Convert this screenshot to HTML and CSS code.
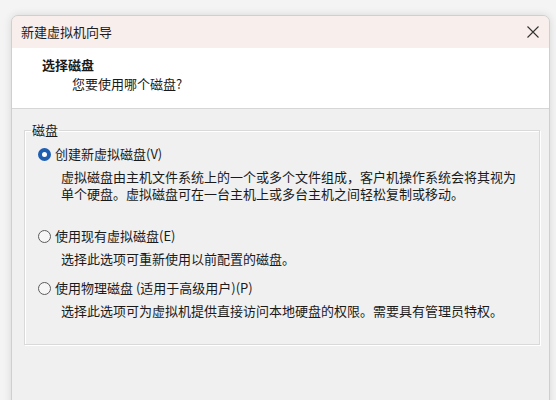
FILE: index.html
```html
<!DOCTYPE html>
<html lang="zh-CN">

<head>
    <meta charset="UTF-8">
    <meta name="viewport" content="width=device-width, initial-scale=1.0">
    <title>新建虚拟机向导</title>
    <link rel="stylesheet" href="styles.css">
</head>

<body>
    <div class="window">
        <div class="titlebar">
            <span class="title">新建虚拟机向导</span>
            <span class="close">
                <svg width="12" height="12" viewBox="0 0 12 12">
                    <path d="M0.5 0.5 L11.5 11.5 M11.5 0.5 L0.5 11.5" stroke="#333" stroke-width="1.1" fill="none" />
                </svg>
            </span>
        </div>

        <div class="header">
            <div class="header-title">选择磁盘</div>
            <div class="header-sub">您要使用哪个磁盘?</div>
        </div>

        <div class="content">
            <fieldset class="group">
                <legend>磁盘</legend>

                <div class="option option-1">
                    <span class="radio checked"></span>
                    <span class="label">创建新虚拟磁盘(V)</span>
                </div>
                <div class="desc">
                    <div>虚拟磁盘由主机文件系统上的一个或多个文件组成，客户机操作系统会将其视为</div>
                    <div>单个硬盘。虚拟磁盘可在一台主机上或多台主机之间轻松复制或移动。</div>
                </div>

                <div class="option option-2">
                    <span class="radio"></span>
                    <span class="label">使用现有虚拟磁盘(E)</span>
                </div>
                <div class="desc">选择此选项可重新使用以前配置的磁盘。</div>

                <div class="option option-3">
                    <span class="radio"></span>
                    <span class="label">使用物理磁盘 (适用于高级用户)(P)</span>
                </div>
                <div class="desc">选择此选项可为虚拟机提供直接访问本地硬盘的权限。需要具有管理员特权。</div>
            </fieldset>
        </div>
    </div>
</body>

</html>
```

FILE: styles.css
```css
* {
    box-sizing: border-box;
}

html,
body {
    height: 100%;
}

body {
    margin: 0;
    padding: 15px 0 0 11px;
    overflow: hidden;
    background: #f4f4f4;
    font-family: "Noto Sans CJK SC", "Noto Sans", sans-serif;
    font-size: 13px;
    line-height: 16px;
    color: #1a1a1a;
}

.window {
    width: 539px;
    height: 420px;
    border: 1px solid #cfcfcf;
    border-radius: 7px 7px 0 0;
    overflow: hidden;
    background: #f0f0f0;
    box-shadow: 0 0 8px rgba(0, 0, 0, 0.12);
}

.titlebar {
    height: 32px;
    display: flex;
    align-items: center;
    justify-content: space-between;
    padding: 0 9px 0 9px;
    background: #f8eeec;
}

.title {
    font-size: 13px;
    color: #1c1c1c;
}

.close {
    display: flex;
    margin-right: 1px;
}

.header {
    height: 61px;
    background: #ffffff;
    border-bottom: 1px solid #d6d6d6;
    padding-top: 9px;
}

.header-title {
    margin-left: 30px;
    font-weight: bold;
    font-size: 13px;
}

.header-sub {
    margin-left: 60px;
    margin-top: 3px;
}

.content {
    padding: 13px 10px 0 12px;
}

.group {
    margin: 0;
    width: 516px;
    border: 1px solid #d9d9d9;
    box-shadow: inset 1px 1px #ffffff, 1px 1px #ffffff;
    padding: 8px 10px 25px 13px;
}

.group legend {
    padding: 0 1px;
    margin-left: -7px;
    line-height: 16px;
}

.option {
    display: flex;
    align-items: center;
    gap: 4px;
    height: 16px;
}

.option-2 {
    margin-top: 26px;
}

.option-3 {
    margin-top: 13px;
}

.radio {
    width: 13px;
    height: 13px;
    border-radius: 50%;
    border: 1px solid #5b5b5b;
    background: #f6f6f6;
    flex: none;
}

.radio.checked {
    border: 4px solid #1f5fb0;
    background: #ffffff;
}

.desc {
    margin: 6px 0 0 23px;
    line-height: 17px;
}
```
